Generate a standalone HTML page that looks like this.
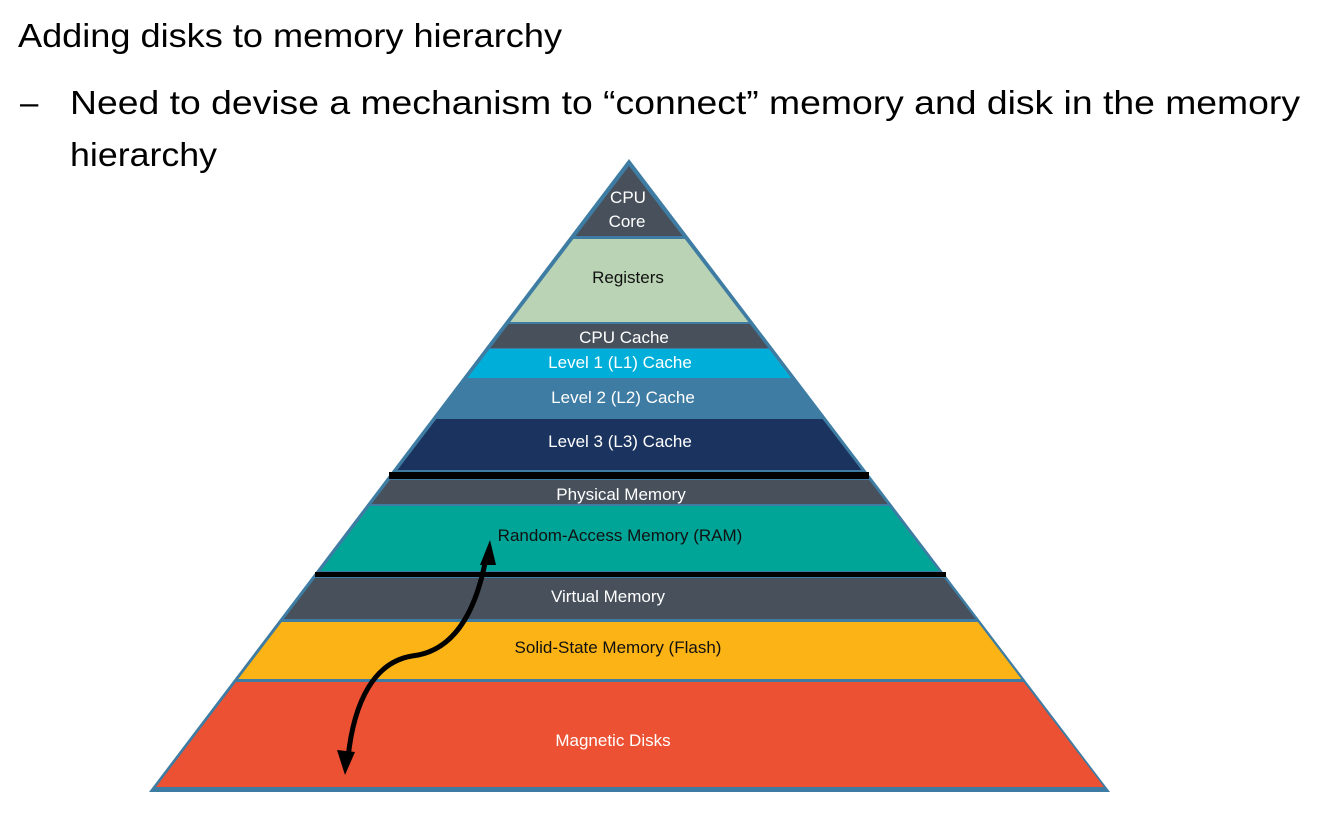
<!DOCTYPE html>
<html><head><meta charset="utf-8"><style>
html,body{margin:0;padding:0;background:#fff;width:1324px;height:814px;overflow:hidden}
svg{display:block}
</style></head><body>
<svg width="1324" height="814" viewBox="0 0 1324 814" xmlns="http://www.w3.org/2000/svg">
<defs>
<clipPath id="tri"><polygon points="629,166 156,787 1104,787"/></clipPath>
</defs>
<text x="18" y="47" font-family="Liberation Sans, sans-serif" font-size="33" fill="#000" textLength="544" lengthAdjust="spacingAndGlyphs">Adding disks to memory hierarchy</text>
<text x="20" y="114" font-family="Liberation Sans, sans-serif" font-size="33" fill="#000">–</text>
<text x="70" y="114" font-family="Liberation Sans, sans-serif" font-size="33" fill="#000" textLength="1230" lengthAdjust="spacingAndGlyphs">Need to devise a mechanism to “connect” memory and disk in the memory</text>
<text x="70" y="166" font-family="Liberation Sans, sans-serif" font-size="33" fill="#000" textLength="147" lengthAdjust="spacingAndGlyphs">hierarchy</text>

<polygon points="629,159 149,792 1110,792" fill="#3e7ca3"/>
<g clip-path="url(#tri)">
<rect x="0" y="160" width="1324" height="76" fill="#47505b"/>
<rect x="0" y="239" width="1324" height="83" fill="#b9d3b4"/>
<rect x="0" y="324" width="1324" height="24" fill="#47505b"/>
<rect x="0" y="349" width="1324" height="29" fill="#00afd9"/>
<rect x="0" y="379" width="1324" height="39" fill="#3e7ca3"/>
<rect x="0" y="419" width="1324" height="51" fill="#1b335f"/>
<rect x="0" y="480" width="1324" height="24" fill="#47505b"/>
<rect x="0" y="506" width="1324" height="65" fill="#00a597"/>
<rect x="0" y="578" width="1324" height="41" fill="#47505b"/>
<rect x="0" y="622" width="1324" height="57" fill="#fbb316"/>
<rect x="0" y="682" width="1324" height="105" fill="#ec5133"/>
</g>
<rect x="389" y="472" width="480" height="7" fill="#000"/>
<rect x="315" y="572" width="631" height="5" fill="#000"/>

<g font-family="Liberation Sans, sans-serif" font-size="17" text-anchor="middle" fill="#fff">
<text x="628" y="203">CPU</text>
<text x="627" y="227">Core</text>
<text x="628" y="283" fill="#111">Registers</text>
<text x="624" y="343">CPU Cache</text>
<text x="620" y="368">Level 1 (L1) Cache</text>
<text x="623" y="403">Level 2 (L2) Cache</text>
<text x="620" y="447">Level 3 (L3) Cache</text>
<text x="621" y="500">Physical Memory</text>
<text x="620" y="541" fill="#111">Random-Access Memory (RAM)</text>
<text x="608" y="602">Virtual Memory</text>
<text x="618" y="653" fill="#111">Solid-State Memory (Flash)</text>
<text x="613" y="746">Magnetic Disks</text>
</g>

<path d="M348,758 C354,700 375,662 412,656 C448,652 474,622 486,558" fill="none" stroke="#000" stroke-width="5"/>
<polygon points="490,540 480,565 496,565" fill="#000"/>
<polygon points="345,775 337,750 355,752" fill="#000"/>
</svg>
</body></html>
